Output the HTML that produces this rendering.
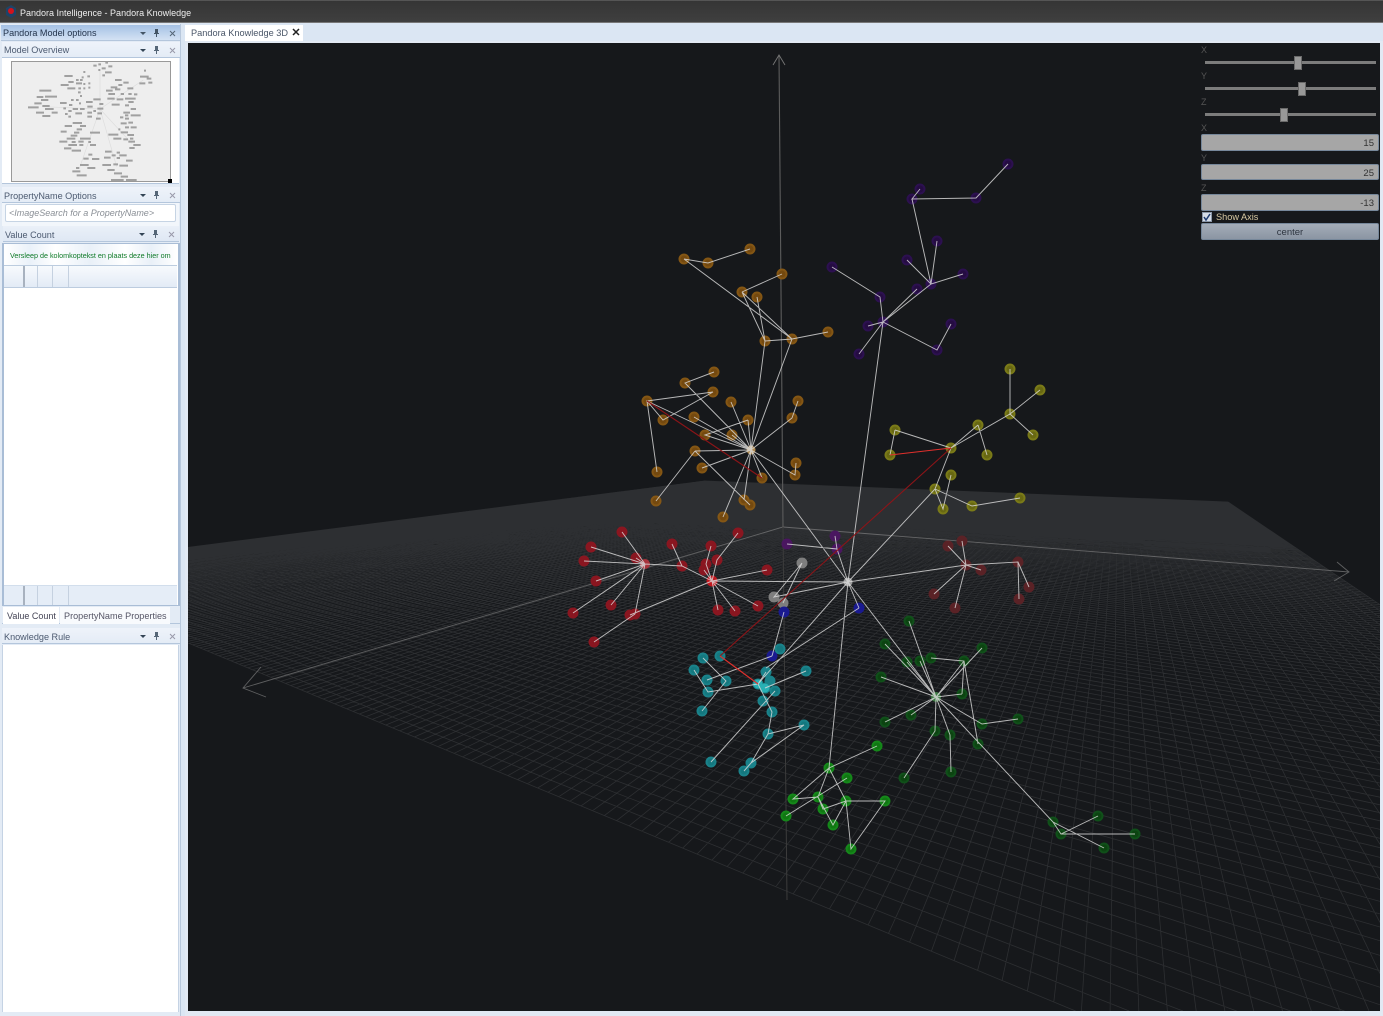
<!DOCTYPE html>
<html><head><meta charset="utf-8"><title>Pandora Knowledge</title>
<style>
html,body{margin:0;padding:0;width:1383px;height:1016px;overflow:hidden;background:#dbe6f3;font-family:"Liberation Sans",sans-serif;}
.a{position:absolute;white-space:nowrap;box-sizing:border-box;}
.hd{position:absolute;left:2px;width:178px;height:16px;background:linear-gradient(#eef3fa,#e4ecf6);border-bottom:1px solid #b4c6dc;font-size:9.1px;line-height:17px;color:#4c5a70;padding-left:2px;box-sizing:border-box;}
.hd svg{position:absolute;right:3px;top:3px;}
.lb{position:absolute;color:#555;font-size:9px;}
.box{position:absolute;left:1201px;width:178px;background:#a6a6a6;border:1px solid #76879a;border-radius:2px;box-sizing:border-box;color:#333;font-size:9.5px;text-align:right;padding-right:4px;}
.tr{position:absolute;left:1205px;width:171px;height:3px;background:#7c7c7c;}
.th{position:absolute;width:8px;height:14px;background:#989898;border:1px solid #6a6a6a;box-sizing:border-box;}
</style></head><body>
<div class="a" style="left:0;top:0;width:1383px;height:23px;background:linear-gradient(#353535,#3f3f3f);border-top:1px solid #555;border-bottom:1px solid #777"></div>
<svg class="a" style="left:5px;top:5px" width="12" height="14"><path d="M6 0l5 3v7l-5 3-5-3V3z" fill="#1e4468"/><circle cx="6" cy="6" r="3" fill="#d3121c"/></svg>
<div class="a" style="left:20px;top:7px;color:#eee;font-size:9px;line-height:13px">Pandora Intelligence - Pandora Knowledge</div>

<div class="a" style="left:0;top:24px;width:181px;height:992px;background:#e3ebf5;border-right:1px solid #b8c8dc"></div>
<div class="hd" style="left:1px;top:25px;height:16px;width:179px;background:linear-gradient(#a4c1e4,#d4e2f3);color:#24344c">Pandora Model options<svg width="42" height="10"><path d="M5 4h6l-3 3z" fill="#456"/><path d="M20 1h3v4h1v1h-2v3h-1V6h-2V5h1z" fill="#456"/><path d="M35 3l5 5M40 3l-5 5" stroke="#567"/></svg></div>
<div class="hd" style="top:42px">Model Overview<svg width="42" height="10"><path d="M5 4h6l-3 3z" fill="#345"/><path d="M20 1h3v4h1v1h-2v3h-1V6h-2V5h1z" fill="#567"/><path d="M35 3l5 5M40 3l-5 5" stroke="#99a"/></svg></div>
<div class="a" style="left:2px;top:58px;width:177px;height:126px;background:#fff"></div>
<div class="a" style="left:11px;top:61px;width:160px;height:121px;background:#eee;border:1px solid #999"></div>
<svg class="a" style="left:0;top:0" width="310" height="300" viewBox="0 0 930 900">
<path d="M300 327L240 500M300 327L350 500M300 327L395 430M300 327L430 240M300 327L130 320M300 327L300 210" stroke="#ddd" stroke-width="2" fill="none"/>
<path stroke="#a0a0a0" stroke-width="6" fill="none" d="M280 197h10M295 193h8M316 188h8M305 205h12M325 199h12M295 210h6M315 217h20M307 226h8M250 216h6M262 229h8M193 228h25M228 240h8M240 240h8M245 232h6M205 246h16M228 250h18M182 255h24M250 252h6M265 250h6M202 265h24M235 265h8M250 265h6M265 263h6M234 277h8M240 288h6M118 272h36M110 291h20M135 290h36M123 300h22M103 310h22M84 322h32M127 318h22M135 327h26M108 338h24M155 338h18M127 348h24M180 309h20M213 300h8M228 300h8M207 315h10M237 310h6M258 306h20M280 298h22M298 312h12M262 320h16M218 327h16M240 327h14M205 333h10M190 325h8M292 326h18M195 342h8M226 340h20M262 338h14M280 333h8M205 350h8M262 350h14M292 340h14M288 356h14M345 240h20M370 248h16M332 262h20M355 255h12M382 265h18M318 272h20M345 268h16M362 282h10M385 282h10M402 283h10M325 282h20M322 296h22M350 298h20M375 296h32M385 306h16M335 314h24M375 316h12M392 327h16M370 338h20M392 346h30M360 352h10M375 346h10M375 356h12M385 368h14M362 370h18M375 382h12M392 382h18M355 388h6M432 212h6M420 230h26M440 236h14M418 250h18M445 248h12M218 369h28M194 378h22M240 378h18M230 388h16M182 395h18M222 398h16M212 407h20M240 416h32M200 416h26M178 425h24M215 426h12M235 425h16M205 435h26M238 435h12M192 445h22M215 452h28M270 398h30M265 426h8M270 435h18M325 404h30M362 397h22M382 405h20M340 416h24M370 418h14M390 416h10M385 425h20M400 435h22M388 444h16M315 455h20M350 458h10M335 466h12M312 473h20M358 466h22M350 474h10M378 482h20M307 495h26M340 493h14M358 497h26M322 510h22M342 520h24M362 530h22M333 540h38M378 540h32M265 464h12M250 476h16M276 477h22M240 495h26M262 504h24M228 504h10M217 514h24M230 526h30"/></svg>
<div class="a" style="left:168px;top:179px;width:4px;height:4px;background:#000"></div>
<div class="a" style="left:2px;top:183px;width:177px;height:1px;background:#b4c6dc"></div>
<div class="hd" style="top:187px;line-height:18px">PropertyName Options<svg width="42" height="10"><path d="M5 4h6l-3 3z" fill="#345"/><path d="M20 1h3v4h1v1h-2v3h-1V6h-2V5h1z" fill="#567"/><path d="M35 3l5 5M40 3l-5 5" stroke="#99a"/></svg></div>
<div class="a" style="left:2px;top:203px;width:177px;height:23px;background:#f2f6fb"></div>
<div class="a" style="left:5px;top:204px;width:171px;height:18px;background:#fff;border:1px solid #c6d4e4;border-radius:2px;font-size:9px;font-style:italic;color:#8a8f96;line-height:16px;padding-left:3px">&lt;ImageSearch for a PropertyName&gt;</div>
<div class="hd" style="top:226px;left:3px;width:176px;line-height:18px;background:linear-gradient(#eaf0f8,#dfe8f4)">Value Count<svg width="42" height="10"><path d="M5 4h6l-3 3z" fill="#345"/><path d="M20 1h3v4h1v1h-2v3h-1V6h-2V5h1z" fill="#567"/><path d="M35 3l5 5M40 3l-5 5" stroke="#99a"/></svg></div>
<div class="a" style="left:2px;top:243px;width:178px;height:363px;background:#fff;border:1px solid #a9bdd6;border-width:1px 2px"></div>
<div class="a" style="left:4px;top:244px;width:173px;height:22px;background:linear-gradient(90deg,#fff,#eaf1f9 15%,#fff 30%,#e9f0f8 50%,#fff 70%,#e9f0f8 85%,#fff);border-bottom:1px solid #bcccdf;color:#0f7a28;font-size:7.2px;line-height:23px;padding-left:6px">Versleep de kolomkoptekst en plaats deze hier om</div>
<div class="a" style="left:4px;top:266px;width:173px;height:22px;background:linear-gradient(#f7fafd,#e3ebf6);border-bottom:1px solid #bcccdf"></div>
<div class="a" style="left:23px;top:266px;width:2px;height:21px;background:#a8b2bf"></div>
<div class="a" style="left:37px;top:266px;width:1px;height:21px;background:#c5d1e0"></div>
<div class="a" style="left:52px;top:266px;width:1px;height:21px;background:#c5d1e0"></div>
<div class="a" style="left:68px;top:266px;width:1px;height:21px;background:#c5d1e0"></div>
<div class="a" style="left:4px;top:585px;width:173px;height:20px;background:#e5edf7;border-top:1px solid #d2deec"></div>
<div class="a" style="left:23px;top:586px;width:2px;height:19px;background:#a8b2bf"></div>
<div class="a" style="left:37px;top:586px;width:1px;height:19px;background:#c5d1e0"></div>
<div class="a" style="left:52px;top:586px;width:1px;height:19px;background:#c5d1e0"></div>
<div class="a" style="left:68px;top:586px;width:1px;height:19px;background:#c5d1e0"></div>
<div class="a" style="left:2px;top:606px;width:178px;height:18px;background:#e3ebf5;border-bottom:1px solid #b4c6dc"></div>
<div class="a" style="left:3px;top:607px;width:56px;height:17px;background:#fff;font-size:9px;line-height:18px;color:#445;padding-left:4px">Value Count</div>
<div class="a" style="left:60px;top:607px;width:110px;height:17px;background:#f8fafd;font-size:9.1px;line-height:18px;color:#556;padding-left:4px">PropertyName Properties</div>
<div class="hd" style="top:628px;line-height:18px">Knowledge Rule<svg width="42" height="10"><path d="M5 4h6l-3 3z" fill="#345"/><path d="M20 1h3v4h1v1h-2v3h-1V6h-2V5h1z" fill="#567"/><path d="M35 3l5 5M40 3l-5 5" stroke="#99a"/></svg></div>
<div class="a" style="left:2px;top:645px;width:177px;height:367px;background:#fff;border-left:1px solid #c5d3e4;border-right:1px solid #c5d3e4"></div>

<div class="a" style="left:185px;top:25px;width:118px;height:16px;background:#fff;font-size:9.2px;line-height:17px;color:#4a5668;padding-left:6px">Pandora Knowledge 3D<svg style="position:absolute;left:107px;top:3px" width="9" height="9"><path d="M1 1l6 6M7 1l-6 6" stroke="#222" stroke-width="1.5"/></svg></div>
<div class="a" style="left:185px;top:41px;width:1198px;height:975px;background:#e2e9f3"></div>

<div class="a" id="vp" style="left:188px;top:43px;width:1192px;height:968px;background:#16181b;overflow:hidden">
<svg id="s" width="1192" height="968" viewBox="188 43 1192 968" style="position:absolute;left:0;top:0;display:block">
<g id="grid" stroke="#fff" stroke-opacity=".1" stroke-width=".8" fill="none"></g>
<path d="M243 688L783 527L1349 572M261 667L243 688L266 697M1337 562L1349 572L1334 581" stroke="#8b8b8b" stroke-width=".9" fill="none" opacity=".62"/>
<path d="M779 55L783 527" stroke="#5c5c5c" stroke-width="1.1" fill="none"/>
<path d="M773 65L779 55L785 65" stroke="#777" stroke-width=".9" fill="none"/>
<path d="M783 527L787 900" stroke="#3c3c3c" stroke-width="1" fill="none"/>

<g fill="none" stroke-linecap="round">
<path stroke="#8a5a14" stroke-width="11" opacity=".95" d="M684 259h0M708 263h0M750 249h0M782 274h0M742 292h0M757 297h0M765 341h0M792 339h0M828 332h0M714 372h0M685 383h0M713 392h0M647 401h0M731 402h0M798 401h0M663 420h0M792 418h0M748 420h0M694 417h0M705 435h0M732 435h0M695 451h0M796 463h0M702 468h0M795 475h0M762 478h0M657 472h0M656 501h0M744 500h0M750 505h0M723 517h0"/>
<path stroke="#74490f" stroke-width="7" d="M684 259h0M708 263h0M750 249h0M782 274h0M742 292h0M757 297h0M765 341h0M792 339h0M828 332h0M714 372h0M685 383h0M713 392h0M647 401h0M731 402h0M798 401h0M663 420h0M792 418h0M748 420h0M694 417h0M705 435h0M732 435h0M695 451h0M796 463h0M702 468h0M795 475h0M762 478h0M657 472h0M656 501h0M744 500h0M750 505h0M723 517h0"/>
<path stroke="#b08a50" stroke-width="9" d="M751 450h0"/>
<path stroke="#2c1050" stroke-width="11" d="M1008 164h0M920 189h0M912 199h0M976 198h0M937 241h0M907 260h0M832 267h0M963 274h0M931 284h0M917 289h0M880 297h0M883 322h0M868 326h0M951 324h0M937 350h0M859 354h0"/>
<path stroke="#250c42" stroke-width="7" d="M1008 164h0M920 189h0M912 199h0M976 198h0M937 241h0M907 260h0M832 267h0M963 274h0M917 289h0M880 297h0M868 326h0M951 324h0M937 350h0M859 354h0"/>
<path stroke="#7a7a18" stroke-width="11" d="M1010 369h0M1040 390h0M1010 414h0M978 425h0M1033 435h0M895 430h0M951 448h0M890 455h0M987 455h0M951 475h0M935 489h0M943 509h0M972 506h0M1020 498h0"/>
<path stroke="#686812" stroke-width="7" d="M1010 369h0M1040 390h0M1010 414h0M978 425h0M1033 435h0M895 430h0M951 448h0M890 455h0M987 455h0M951 475h0M935 489h0M943 509h0M972 506h0M1020 498h0"/>
<path stroke="#5a2226" stroke-width="11" d="M962 541h0M948 546h0M966 565h0M981 570h0M1018 562h0M1029 587h0M934 594h0M1019 599h0M955 608h0"/>
<path stroke="#8a1620" stroke-width="11" d="M622 532h0M738 533h0M591 547h0M672 544h0M711 546h0M636 558h0M717 560h0M584 561h0M706 564h0M682 566h0M704 570h0M767 570h0M596 581h0M611 605h0M573 613h0M630 615h0M635 614h0M718 610h0M735 611h0M758 606h0M594 642h0"/>
<path stroke="#a8343c" stroke-width="10" d="M645 564h0"/>
<path stroke="#c0181f" stroke-width="11" d="M712 581h0"/>
<path stroke="#7e7e7e" stroke-width="11" d="M802 563h0M774 597h0M783 603h0"/>
<path stroke="#1a1a90" stroke-width="11" d="M784 612h0M772 656h0M859 608h0"/>
<path stroke="#4a1660" stroke-width="11" d="M787 544h0M835 536h0M837 549h0"/>
<path stroke="#1a8890" stroke-width="11" opacity=".95" d="M720 656h0M703 658h0M780 649h0M694 670h0M806 671h0M766 672h0M726 681h0M707 680h0M770 681h0M758 684h0M765 688h0M775 691h0M708 692h0M763 701h0M702 711h0M772 712h0M804 725h0M768 734h0M711 762h0M751 763h0M744 771h0"/>
<path stroke="#14787f" stroke-width="7" d="M720 656h0M703 658h0M780 649h0M694 670h0M806 671h0M726 681h0M707 680h0M775 691h0M708 692h0M763 701h0M702 711h0M772 712h0M804 725h0M768 734h0M711 762h0M744 771h0"/>
<path stroke="#28b0b4" stroke-width="9" d="M758 684h0M765 688h0"/>
<path stroke="#15881a" stroke-width="11" d="M877 746h0M829 768h0M847 778h0M793 799h0M818 797h0M846 801h0M885 801h0M823 809h0M786 816h0M833 825h0M851 849h0"/>
<path stroke="#107812" stroke-width="7" d="M877 746h0M829 768h0M847 778h0M793 799h0M818 797h0M846 801h0M885 801h0M823 809h0M786 816h0M833 825h0M851 849h0"/>
<path stroke="#10501a" stroke-width="11" d="M909 621h0M885 644h0M907 662h0M920 661h0M931 658h0M964 661h0M982 648h0M881 677h0M962 694h0M911 715h0M885 722h0M982 724h0M1018 719h0M935 731h0M950 735h0M978 744h0M904 778h0M951 772h0M1053 822h0M1098 816h0M1061 834h0M1135 834h0M1104 848h0"/>
<path stroke="#0c4411" stroke-width="7" d="M909 621h0M885 644h0M907 662h0M920 661h0M931 658h0M964 661h0M982 648h0M881 677h0M962 694h0M911 715h0M885 722h0M982 724h0M1018 719h0M935 731h0M950 735h0M978 744h0M904 778h0M951 772h0M1053 822h0M1098 816h0M1061 834h0M1135 834h0M1104 848h0"/>
<path stroke="#3f7a45" stroke-width="10" d="M936 697h0"/>
<path stroke="#9c9c9c" stroke-width="9" d="M848 582h0"/>
</g>

<g fill="none">
<path stroke="#dcdcdc" stroke-width=".95" opacity=".82" d="M684 259L708 263L750 249M684 259L792 339M742 292L782 274M742 292L792 339M742 292L765 341M757 297L765 341M765 341L792 339L828 332M765 341L751 450M792 339L751 450M714 372L685 383L751 450M713 392L647 401L663 420L713 392M647 401L657 472M647 401L751 450M731 402L751 450M798 401L792 418L751 450M748 420L705 435L751 450M748 420L751 450M694 417L751 450M732 435L751 450M695 451L751 450M695 451L656 501M695 451L750 505M702 468L751 450M796 463L795 475L751 450M762 478L751 450M744 500L751 450M723 517L751 450M751 450L848 582
M1008 164L976 198L912 199L920 189M912 199L931 284M937 241L931 284M907 260L931 284M963 274L931 284L883 322M917 289L883 322M832 267L880 297L883 322M868 326L883 322M859 354L883 322M883 322L937 350L951 324M883 322L848 582
M1010 369L1010 414M1040 390L1010 414M1033 435L1010 414L951 448M978 425L951 448M978 425L987 455M895 430L951 448M895 430L890 455M951 448L935 489L943 509L951 475M935 489L972 506L1020 498M935 489L848 582
M962 541L966 565M948 546L966 565M981 570L966 565M934 594L966 565M955 608L966 565L1018 562L1029 587M1018 562L1019 599M966 565L848 582
M622 532L645 564M591 547L645 564M584 561L645 564M636 558L645 564M596 581L645 564M573 613L645 564M611 605L645 564M635 614L645 564L682 566L712 581M594 642L635 614M630 615L712 581M672 544L682 566M711 546L706 564L712 581M738 533L717 560L712 581M704 570L712 581M767 570L712 581M718 610L712 581M735 611L712 581M758 606L712 581L848 582
M802 563L774 597L848 582M802 563L783 603M784 612L772 656M772 656L707 680M859 608L766 668M848 582L758 684M787 544L837 549L848 582M835 536L837 549M848 582L859 608
M703 658L726 681L702 711M694 670L708 692L758 684M806 671L765 688M766 672L758 684M711 762L775 691M758 684L772 712L768 734L804 725L751 763L744 771M768 734L751 763
M877 746L829 768L848 582M829 768L793 799L818 797M829 768L818 797M829 768L846 801M847 778L786 816M818 797L823 809L846 801M818 797L833 825L846 801L885 801L851 849L846 801
M848 582L936 697M936 697L909 621M936 697L885 644M936 697L907 662M936 697L920 661M936 697L964 661M936 697L982 648M936 697L881 677M936 697L962 694M936 697L911 715M936 697L885 722M936 697L982 724L1018 719M936 697L935 731L904 778M936 697L950 735L951 772M936 697L1053 822L1104 848M931 658L964 661L962 694M964 661L978 744M1053 822L1061 834L1098 816M1061 834L1135 834"/>
<path stroke="#8c1418" stroke-width="1.1" d="M951 448L720 656M647 401L762 478"/>
<path stroke="#e0302c" stroke-width="1.1" d="M890 455L951 448M720 656L758 684"/>
</g>
</svg></div>

<div class="lb" style="left:1201px;top:45px">X</div>
<div class="lb" style="left:1201px;top:71px">Y</div>
<div class="lb" style="left:1201px;top:97px">Z</div>
<div class="tr" style="top:61px"></div><div class="th" style="left:1294px;top:56px"></div>
<div class="tr" style="top:87px"></div><div class="th" style="left:1298px;top:82px"></div>
<div class="tr" style="top:113px"></div><div class="th" style="left:1280px;top:108px"></div>
<div class="lb" style="left:1201px;top:123px">X</div>
<div class="box" style="top:134px;height:17px;line-height:18px">15</div>
<div class="lb" style="left:1201px;top:153px">Y</div>
<div class="box" style="top:164px;height:16px;line-height:18px">25</div>
<div class="lb" style="left:1201px;top:183px">Z</div>
<div class="box" style="top:194px;height:17px;line-height:18px">-13</div>
<div class="a" style="left:1202px;top:212px;width:10px;height:10px;background:#d5dce6;border:1px solid #8a97a8"></div>
<svg class="a" style="left:1202px;top:212px" width="10" height="10"><path d="M2 5l2 3 4-6" stroke="#1c3a70" stroke-width="1.5" fill="none"/></svg>
<div class="a" style="left:1216px;top:212px;color:#d8c9a2;font-size:9.2px;line-height:11px">Show Axis</div>
<div class="a" style="left:1201px;top:223px;width:178px;height:17px;background:linear-gradient(#a4adb8,#8b95a3);border:1px solid #76879a;border-radius:2px;color:#2e3540;font-size:9.5px;line-height:17px;text-align:center">center</div>

<script>
(function(){
var x0=705,y0=481,x1=1228,y1=502,x2=3420,y2=1983,x3=12,y3=570;
var sx=x0-x1+x2-x3,sy=y0-y1+y2-y3,dx1=x1-x2,dx2=x3-x2,dy1=y1-y2,dy2=y3-y2,den=dx1*dy2-dx2*dy1;
var g=(sx*dy2-dx2*sy)/den,h=(dx1*sy-sx*dy1)/den;
var a=x1-x0+g*x1,b=x3-x0+h*x3,c=x0,d=y1-y0+g*y1,e=y3-y0+h*y3,f=y0;
function P(u,v){var w=g*u+h*v+1;return [(a*u+b*v+c)/w,(d*u+e*v+f)/w];}
function L(p,q){var t0=0,t1=1,dx=q[0]-p[0],dy=q[1]-p[1];
var P2=[-dx,dx,-dy,dy],Q=[p[0]-188,1380-p[0],p[1]-43,1011-p[1]];
for(var k=0;k<4;k++){if(P2[k]===0){if(Q[k]<0)return '';continue;}
var r=Q[k]/P2[k];if(P2[k]<0){if(r>t1)return '';if(r>t0)t0=r;}else{if(r<t0)return '';if(r<t1)t1=r;}}
return 'M'+(p[0]+t0*dx).toFixed(1)+' '+(p[1]+t0*dy).toFixed(1)+'L'+(p[0]+t1*dx).toFixed(1)+' '+(p[1]+t1*dy).toFixed(1);}
var N=200,s='';
for(var i=0;i<=N;i++){var t=i/N;s+=L(P(t,0),P(t,1))+L(P(0,t),P(1,t));}
var p=document.createElementNS('http://www.w3.org/2000/svg','path');
p.setAttribute('d',s);document.getElementById('grid').appendChild(p);
})();
</script>
</body></html>
